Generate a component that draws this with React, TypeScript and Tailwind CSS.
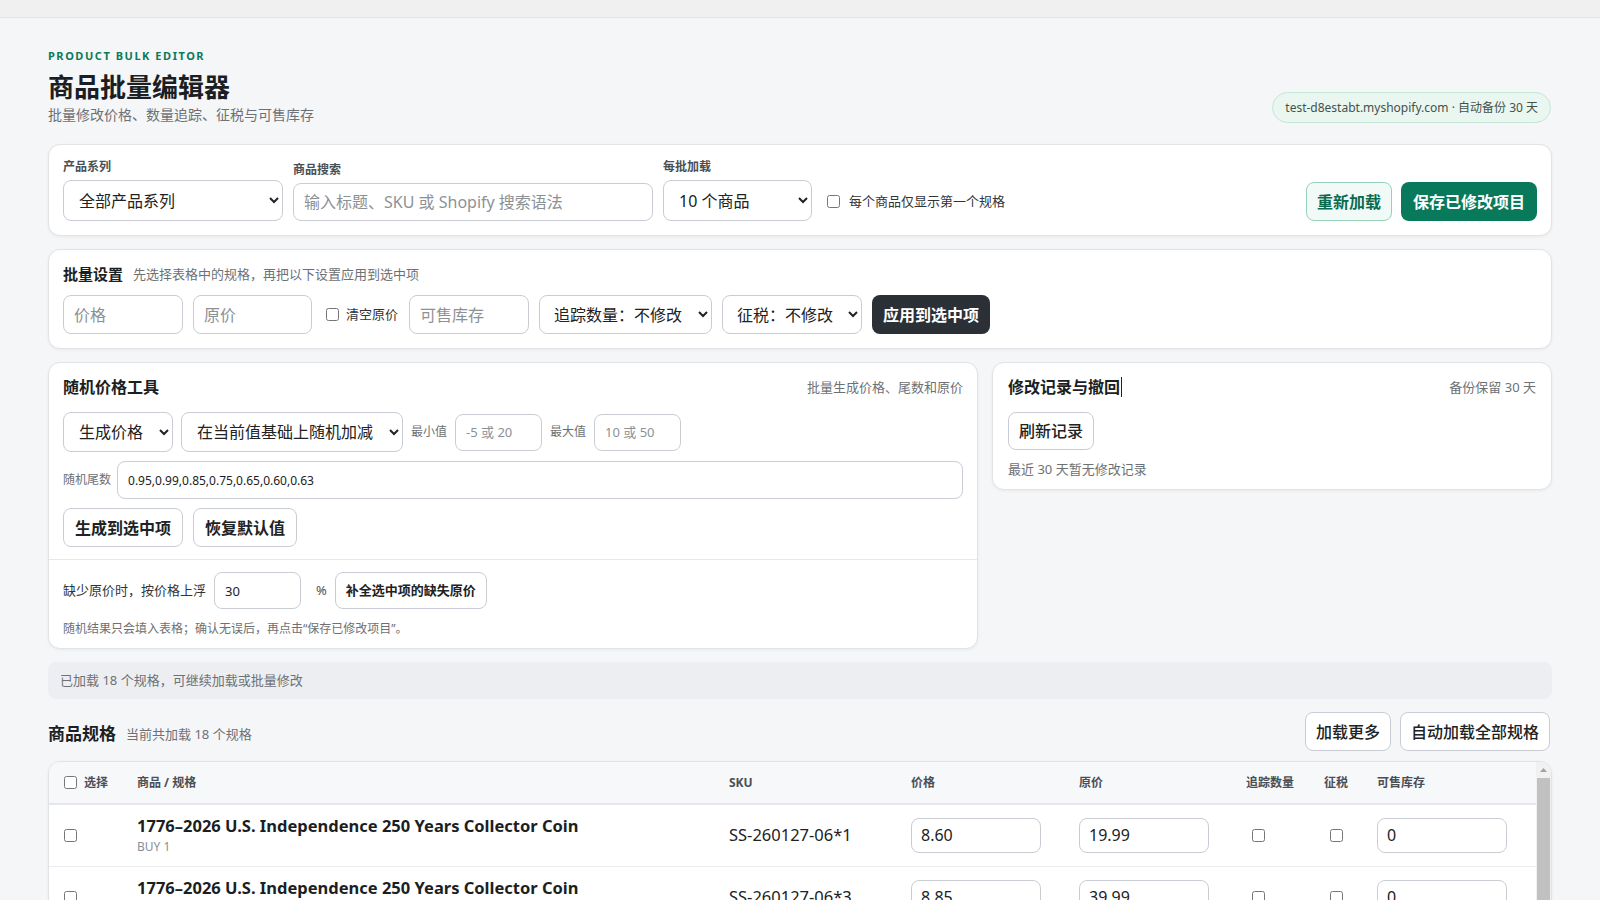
import React from "react";

type Row = { name: string; variant: string; sku: string; price: string; compare: string; stock: string };

const names = [
  "1776–2026 U.S. Independence 250 Years Collector Coin",
  "2026 Year of the Horse Lucky Gold Plated Coin",
  "Statue of Liberty Commemorative Silver Coin",
  "American Eagle Challenge Coin Gift Set",
  "Bitcoin Physical Collectible Gold Coin",
  "Mount Rushmore Presidents Commemorative Coin",
];
const variants = ["BUY 1", "BUY 3", "BUY 5"];
const prices = [
  ["8.60", "19.99"],
  ["8.85", "39.99"],
  ["9.25", "59.99"],
];

const rows: Row[] = [];
names.forEach((n, i) => {
  variants.forEach((v, j) => {
    rows.push({
      name: n,
      variant: v,
      sku: `SS-2601${27 + i}-06*${j * 2 + 1}`,
      price: prices[j][0],
      compare: prices[j][1],
      stock: "0",
    });
  });
});

const inputCls =
  "rounded-lg border border-[#c9cdd3] bg-white text-[#202223] placeholder:text-[#8c9196] outline-none";
const selectCls =
  "rounded-lg border border-[#c9cdd3] bg-white text-base text-[#202223] outline-none";
const card = "rounded-xl border border-[#e1e3e6] bg-white shadow-[0_1px_3px_rgba(0,0,0,0.06)]";

export default function App() {
  return (
    <div className="min-h-screen bg-[#f5f6f8] font-['Noto_Sans','Noto_Sans_CJK_SC',sans-serif] text-[#202223]">
      <div className="h-[18px] border-b border-[#e3e3e3] bg-[#f0f0f0]" />
      <div className="px-12 pt-[31px] pb-8">
        {/* Header */}
        <div className="flex items-end justify-between">
          <div>
            <div className="text-[11px] font-bold leading-[14px] tracking-[0.14em] text-[#0b7a5a]">
              PRODUCT BULK EDITOR
            </div>
            <h1 className="mt-[7px] text-[26px] font-bold leading-[34px] text-[#1b1f23]">商品批量编辑器</h1>
            <div className="mt-[1px] text-sm leading-5 text-[#6d7175]">批量修改价格、数量追踪、征税与可售库存</div>
          </div>
          <div className="mb-[2px] mr-[1px] flex h-[31px] items-center rounded-full border border-[#c4e6d6] bg-[#eaf6f0] px-[12px] text-[12px] text-[#44524d]">
            test-d8estabt.myshopify.com · 自动备份 30 天
          </div>
        </div>

        <div className="mt-[19px] flex flex-col gap-[13px]">
          {/* Filter card */}
          <div className={`${card} flex items-end gap-[10px] p-[14px]`}>
            <div className="flex flex-col">
              <label className="mb-[5px] text-xs font-bold leading-4 text-[#4a4f55]">产品系列</label>
              <select className={`${selectCls} h-[41px] w-[220px] pl-[11px] pr-[8px]`}>
                <option>全部产品系列</option>
              </select>
            </div>
            <div className="flex flex-col">
              <label className="mb-[5px] text-xs font-bold leading-4 text-[#4a4f55]">商品搜索</label>
              <input
                className={`${inputCls} h-[38px] w-[360px] px-[10px] text-base`}
                placeholder="输入标题、SKU 或 Shopify 搜索语法"
              />
            </div>
            <div className="flex flex-col">
              <label className="mb-[5px] text-xs font-bold leading-4 text-[#4a4f55]">每批加载</label>
              <select className={`${selectCls} h-[41px] w-[149px] pl-[11px] pr-[8px]`}>
                <option>10 个商品</option>
              </select>
            </div>
            <label className="mb-[10px] ml-[5px] flex items-center gap-[9px] text-[13px] text-[#303438]">
              <input type="checkbox" />
              每个商品仅显示第一个规格
            </label>
            <div className="ml-auto flex gap-[9px]">
              <button className="h-[39px] rounded-lg border border-[#97d2b8] bg-[#f1faf6] px-[10px] text-base font-bold text-[#0b6b4f]">
                重新加载
              </button>
              <button className="h-[39px] rounded-lg bg-[#087a5b] px-3 text-base font-bold text-white">
                保存已修改项目
              </button>
            </div>
          </div>

          {/* Batch settings */}
          <div className={`${card} px-[14px] pt-[13px] pb-[14px]`}>
            <div className="flex items-center gap-[10px] leading-[22px]">
              <span className="text-[15px] font-bold text-[#1b1f23]">批量设置</span>
              <span className="text-[13px] text-[#6d7175]">先选择表格中的规格，再把以下设置应用到选中项</span>
            </div>
            <div className="mt-[10px] flex items-center gap-[10px]">
              <input className={`${inputCls} h-[39px] w-[120px] px-[10px] text-base`} placeholder="价格" />
              <input className={`${inputCls} h-[39px] w-[119px] px-[10px] text-base`} placeholder="原价" />
              <label className="flex items-center gap-[7px] pl-[4px] pr-[1px] text-[13px] text-[#303438]">
                <input type="checkbox" />
                清空原价
              </label>
              <input className={`${inputCls} h-[39px] w-[120px] px-[10px] text-base`} placeholder="可售库存" />
              <select className={`${selectCls} h-[39px] w-[173px] pl-[10px] pr-[8px]`}>
                <option>追踪数量：不修改</option>
              </select>
              <select className={`${selectCls} h-[39px] w-[140px] pl-[10px] pr-[8px]`}>
                <option>征税：不修改</option>
              </select>
              <button className="h-[39px] rounded-lg bg-[#2b2f36] px-[11px] text-base font-bold text-white">
                应用到选中项
              </button>
            </div>
          </div>

          {/* Two column tools */}
          <div className="grid grid-cols-[930px_1fr] items-start gap-[14px]">
            <div className={`${card}`}>
              <div className="px-[14px] pt-3">
                <div className="flex items-center justify-between leading-[22px]">
                  <span className="text-base font-bold text-[#1b1f23]">随机价格工具</span>
                  <span className="text-[13px] text-[#6d7175]">批量生成价格、尾数和原价</span>
                </div>
                <div className="mt-[13px] flex items-center gap-2">
                  <select className={`${selectCls} h-10 w-[110px] pl-[11px] pr-[8px]`}>
                    <option>生成价格</option>
                  </select>
                  <select className={`${selectCls} h-10 w-[222px] pl-[11px] pr-[8px]`}>
                    <option>在当前值基础上随机加减</option>
                  </select>
                  <span className="text-xs text-[#6d7175]">最小值</span>
                  <input className={`${inputCls} h-[37px] w-[87px] px-[10px] text-[13px]`} placeholder="-5 或 20" />
                  <span className="text-xs text-[#6d7175]">最大值</span>
                  <input className={`${inputCls} h-[37px] w-[87px] px-[10px] text-[13px]`} placeholder="10 或 50" />
                </div>
                <div className="mt-[9px] flex items-center gap-[6px]">
                  <span className="text-xs text-[#6d7175]">随机尾数</span>
                  <input
                    className={`${inputCls} h-[38px] flex-1 px-[10px] text-xs`}
                    defaultValue="0.95,0.99,0.85,0.75,0.65,0.60,0.63"
                  />
                </div>
                <div className="mt-[9px] flex items-center gap-[10px]">
                  <button className="h-[39px] rounded-lg border border-[#c9cdd3] bg-white px-[11px] text-base font-bold text-[#202223]">
                    生成到选中项
                  </button>
                  <button className="h-[39px] rounded-lg border border-[#c9cdd3] bg-white px-[11px] text-base font-bold text-[#202223]">
                    恢复默认值
                  </button>
                </div>
              </div>
              <div className="mt-[12px] border-t border-[#e6e8eb] px-[14px] pt-[12px] pb-[9px]">
                <div className="flex items-center gap-2">
                  <span className="text-[13px] text-[#303438]">缺少原价时，按价格上浮</span>
                  <input className={`${inputCls} h-[37px] w-[87px] px-[10px] text-[13px]`} defaultValue="30" />
                  <span className="pl-[7px] text-[13px] text-[#4a4f55]">%</span>
                  <button className="h-[37px] rounded-lg border border-[#c9cdd3] bg-white px-[10px] text-[13px] font-bold text-[#202223]">
                    补全选中项的缺失原价
                  </button>
                </div>
                <div className="mt-[10px] text-xs leading-5 text-[#6d7175]">
                  随机结果只会填入表格；确认无误后，再点击“保存已修改项目”。
                </div>
              </div>
            </div>

            <div className={`${card} px-[15px] pt-3 pb-[10px]`}>
              <div className="flex items-center justify-between leading-[22px]">
                <span className="flex items-center text-base font-bold text-[#1b1f23]">
                  修改记录与撤回
                  <span className="ml-[1px] inline-block h-[20px] w-px bg-[#1c1c4a]" />
                </span>
                <span className="text-[13px] text-[#6d7175]">备份保留 30 天</span>
              </div>
              <button className="mt-[13px] h-[38px] rounded-lg border border-[#c9cdd3] bg-white px-[10px] text-base font-medium text-[#202223]">
                刷新记录
              </button>
              <div className="mt-[9px] text-[13px] leading-5 text-[#6d7175]">最近 30 天暂无修改记录</div>
            </div>
          </div>

          {/* Status */}
          <div className="flex h-[37px] items-center rounded-lg bg-[#eceef1] px-3 text-[13px] text-[#6d7175]">
            已加载 18 个规格，可继续加载或批量修改
          </div>

          {/* Variants section */}
          <div>
            <div className="flex items-end justify-between">
              <div className="mb-[5px] flex items-center gap-[10px] leading-6">
                <span className="text-[17px] font-bold text-[#1b1f23]">商品规格</span>
                <span className="text-[13px] text-[#6d7175]">当前共加载 18 个规格</span>
              </div>
              <div className="mr-[2px] flex gap-[9px]">
                <button className="h-[39px] rounded-lg border border-[#c9cdd3] bg-white px-[10px] text-base font-medium text-[#202223]">
                  加载更多
                </button>
                <button className="h-[39px] rounded-lg border border-[#c9cdd3] bg-white px-[10px] text-base font-medium text-[#202223]">
                  自动加载全部规格
                </button>
              </div>
            </div>

            <div className={`${card} relative mt-[10px] overflow-hidden`}>
              <div className="max-h-[620px] overflow-y-auto pr-[15px]">
                <table className="w-full table-fixed border-collapse">
                  <colgroup>
                    <col className="w-[77px]" />
                    <col className="w-[592px]" />
                    <col className="w-[182px]" />
                    <col className="w-[168px]" />
                    <col className="w-[167px]" />
                    <col className="w-[78px]" />
                    <col className="w-[53px]" />
                    <col />
                  </colgroup>
                  <thead>
                    <tr className="h-[42px] text-left text-xs font-bold text-[#4a4f55]">
                      <th className="sticky top-0 border-b-2 border-[#e4e6ea] bg-[#f7f8fa] pl-[15px]">
                        <span className="flex items-center gap-[7px]">
                          <input type="checkbox" />
                          选择
                        </span>
                      </th>
                      <th className="sticky top-0 border-b-2 border-[#e4e6ea] bg-[#f7f8fa] pl-[11px]">商品 / 规格</th>
                      <th className="sticky top-0 border-b-2 border-[#e4e6ea] bg-[#f7f8fa] pl-[11px]">SKU</th>
                      <th className="sticky top-0 border-b-2 border-[#e4e6ea] bg-[#f7f8fa] pl-[11px]">价格</th>
                      <th className="sticky top-0 border-b-2 border-[#e4e6ea] bg-[#f7f8fa] pl-[11px]">原价</th>
                      <th className="sticky top-0 border-b-2 border-[#e4e6ea] bg-[#f7f8fa] pl-[11px]">追踪数量</th>
                      <th className="sticky top-0 border-b-2 border-[#e4e6ea] bg-[#f7f8fa] pl-[11px]">征税</th>
                      <th className="sticky top-0 border-b-2 border-[#e4e6ea] bg-[#f7f8fa] pl-[11px]">可售库存</th>
                    </tr>
                  </thead>
                  <tbody>
                    {rows.map((r, i) => (
                      <tr key={i} className="h-[62px] border-b border-[#eaecef]">
                        <td className="pl-[15px] align-middle">
                          <input type="checkbox" className="block" />
                        </td>
                        <td className="pl-[11px] align-middle">
                          <div className="text-[16.5px] font-bold leading-5 text-[#1b1f23]">{r.name}</div>
                          <div className="mt-[3px] text-xs leading-4 text-[#8a8f95]">{r.variant}</div>
                        </td>
                        <td className="pl-[11px] align-middle text-[16.5px] text-[#202223]">{r.sku}</td>
                        <td className="pl-[11px] align-middle">
                          <input className={`${inputCls} h-[35px] w-[130px] px-[9px] text-base`} defaultValue={r.price} />
                        </td>
                        <td className="pl-[11px] align-middle">
                          <input className={`${inputCls} h-[35px] w-[130px] px-[9px] text-base`} defaultValue={r.compare} />
                        </td>
                        <td className="pl-[11px] align-middle">
                          <input type="checkbox" className="ml-[6px] block" />
                        </td>
                        <td className="pl-[11px] align-middle">
                          <input type="checkbox" className="ml-[6px] block" />
                        </td>
                        <td className="pl-[11px] align-middle">
                          <input className={`${inputCls} h-[35px] w-[130px] px-[9px] text-base`} defaultValue={r.stock} />
                        </td>
                      </tr>
                    ))}
                  </tbody>
                </table>
              </div>
              {/* scrollbar */}
              <div className="pointer-events-none absolute top-0 right-0 bottom-0 flex w-[15px] flex-col bg-[#f1f1f1]">
                <div className="flex h-[16px] items-center justify-center">
                  <svg width="7" height="4" viewBox="0 0 7 4">
                    <path d="M0 4 L3.5 0 L7 4 Z" fill="#a3a3a3" />
                  </svg>
                </div>
                <div className="mx-[1px] h-[360px] bg-[#c1c1c1]" />
              </div>
            </div>
          </div>
        </div>
      </div>
    </div>
  );
}
